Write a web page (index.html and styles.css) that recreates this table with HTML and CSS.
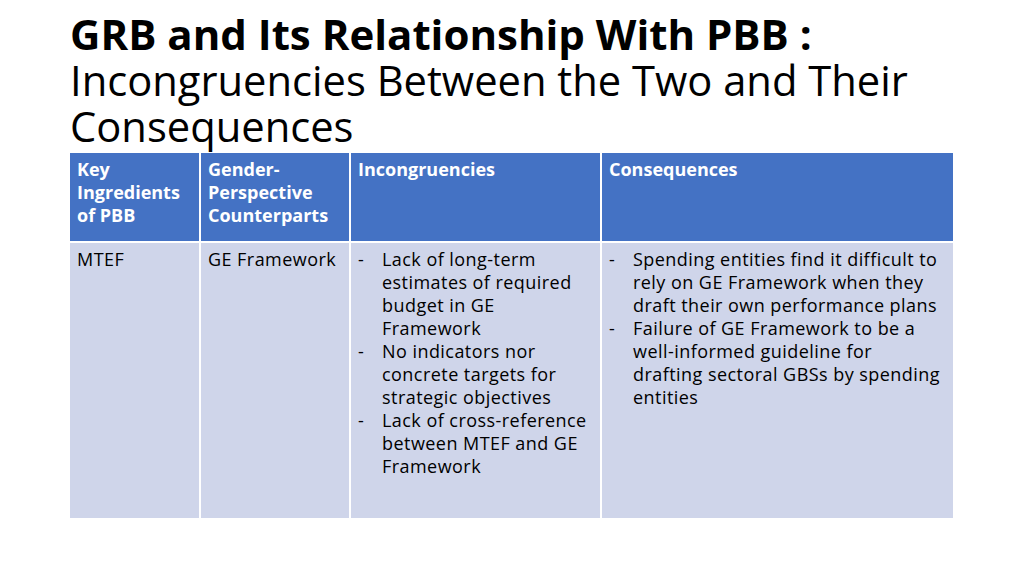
FILE: index.html
```html
<!DOCTYPE html>
<html>
<head>
<meta charset="utf-8">
<link rel="stylesheet" href="styles.css">
</head>
<body>
<div class="slide">
  <h1 class="title"><span class="bold">GRB and Its Relationship With PBB :</span><br><span class="sub">Incongruencies Between the Two and Their<br>Consequences</span></h1>
  <div class="table">
    <div class="cell head">Key<br>Ingredients<br>of PBB</div>
    <div class="cell head">Gender-<br>Perspective<br>Counterparts</div>
    <div class="cell head">Incongruencies</div>
    <div class="cell head">Consequences</div>
    <div class="cell body">MTEF</div>
    <div class="cell body">GE Framework</div>
    <div class="cell body">
      <ul class="dash">
        <li>Lack of long-term<br>estimates of required<br>budget in GE<br>Framework</li>
        <li>No indicators nor<br>concrete targets for<br>strategic objectives</li>
        <li>Lack of cross-reference<br>between MTEF and GE<br>Framework</li>
      </ul>
    </div>
    <div class="cell body">
      <ul class="dash">
        <li>Spending entities find it difficult to<br>rely on GE Framework when they<br>draft their own performance plans</li>
        <li>Failure of GE Framework to be a<br>well-informed guideline for<br>drafting sectoral GBSs by spending<br>entities</li>
      </ul>
    </div>
  </div>
</div>
</body>
</html>
```
FILE: styles.css
```css
html, body {
  margin: 0;
  padding: 0;
  background: #ffffff;
}
.slide {
  width: 1024px;
  height: 576px;
  padding: 11px 0 0 70px;
  box-sizing: border-box;
  font-family: "Open Sans", "Noto Sans", sans-serif;
  color: #000;
}
.title {
  margin: 0;
  font-size: 42px;
  line-height: 46px;
  font-weight: 400;
  width: 940px;
  white-space: nowrap;
}
.bold {
  font-weight: 700;
}
.sub {
  font-size: 41.7px;
}
.table {
  margin-top: 4px;
  width: 883px;
  display: grid;
  grid-template-columns: 129px 148px 249px 351px;
  grid-template-rows: 88px 275px;
  gap: 2px;
  background: #ffffff;
}
.cell {
  font-size: 18px;
  line-height: 23px;
  padding: 5px 6px 0 7px;
  box-sizing: border-box;
  white-space: nowrap;
}
.head {
  background: #4472c4;
  color: #ffffff;
  font-weight: 700;
}
.body {
  background: #cfd5ea;
  color: #000;
  letter-spacing: 0.45px;
}
.dash {
  list-style: none;
  margin: 0;
  padding: 0;
}
.dash li {
  position: relative;
  padding-left: 24px;
}
.dash li::before {
  content: "-";
  position: absolute;
  left: 0;
  top: 0;
}
```
